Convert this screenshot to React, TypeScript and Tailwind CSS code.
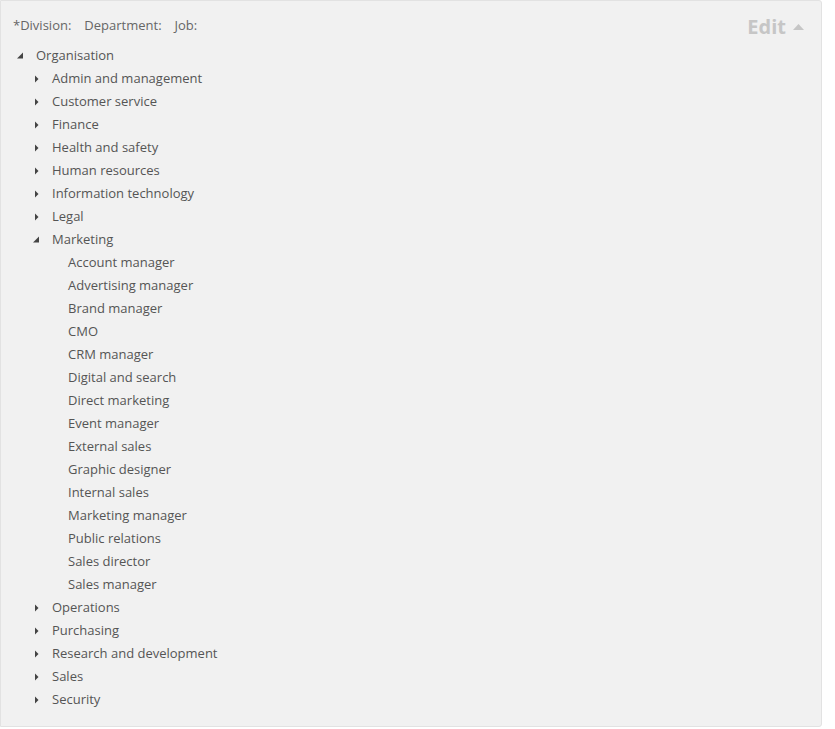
import React from "react";

interface TreeNode {
	label: string;
	children?: TreeNode[];
	open?: boolean;
}

const closed = (label: string): TreeNode => ({ label, children: [] });

const tree: TreeNode = {
	label: "Organisation",
	open: true,
	children: [
		closed("Admin and management"),
		closed("Customer service"),
		closed("Finance"),
		closed("Health and safety"),
		closed("Human resources"),
		closed("Information technology"),
		closed("Legal"),
		{
			label: "Marketing",
			open: true,
			children: [
				"Account manager",
				"Advertising manager",
				"Brand manager",
				"CMO",
				"CRM manager",
				"Digital and search",
				"Direct marketing",
				"Event manager",
				"External sales",
				"Graphic designer",
				"Internal sales",
				"Marketing manager",
				"Public relations",
				"Sales director",
				"Sales manager",
			].map((label) => ({ label })),
		},
		closed("Operations"),
		closed("Purchasing"),
		closed("Research and development"),
		closed("Sales"),
		closed("Security"),
	],
};

function Toggle({ node }: { node: TreeNode }) {
	if (!node.children) return <span className="w-[19px] shrink-0" />;
	return (
		<span className="w-[19px] shrink-0 flex items-center">
			{node.open ? (
				<svg width="8" height="8" viewBox="0 0 8 8" className="mt-[1px]">
					<path d="M6 0.5 L6 6.5 L0 6.5 Z" fill="#444" />
				</svg>
			) : (
				<svg width="8" height="8" viewBox="0 0 8 8">
					<path d="M2 0.5 L5.5 4 L2 7.5 Z" fill="#444" />
				</svg>
			)}
		</span>
	);
}

function TreeRow({ node, depth }: { node: TreeNode; depth: number }) {
	return (
		<>
			<li
				className="flex items-center h-[23px] whitespace-nowrap"
				style={{ paddingLeft: 16 + depth * 16 }}
			>
				<Toggle node={node} />
				<span>{node.label}</span>
			</li>
			{node.open &&
				node.children?.map((child) => (
					<TreeRow key={child.label} node={child} depth={depth + 1} />
				))}
		</>
	);
}

export default function App() {
	return (
		<div className="w-[835px] h-[729px] bg-white font-['Open_Sans',sans-serif]">
			<div className="w-[822px] h-[727px] bg-[#f1f1f1] border border-[#e2e2e2] rounded-r-[3px] px-3 pt-[14px] text-[13px] text-[#555]">
				<div className="flex justify-between items-start">
					<div className="flex gap-[13px] leading-[20px] text-[#666]">
						<span>*Division:</span>
						<span>Department:</span>
						<span>Job:</span>
					</div>
					<div className="flex items-center gap-[7px] mr-[5px] text-[20px] leading-[24px] font-bold text-[#c6c6c6]">
						<span>Edit</span>
						<svg width="11" height="6" viewBox="0 0 11 6">
							<path d="M0 6 L5.5 0 L11 6 Z" fill="#c6c6c6" />
						</svg>
					</div>
				</div>
				<ul className="mt-[5px] -ml-[12px]">
					<TreeRow node={tree} depth={0} />
				</ul>
			</div>
		</div>
	);
}
